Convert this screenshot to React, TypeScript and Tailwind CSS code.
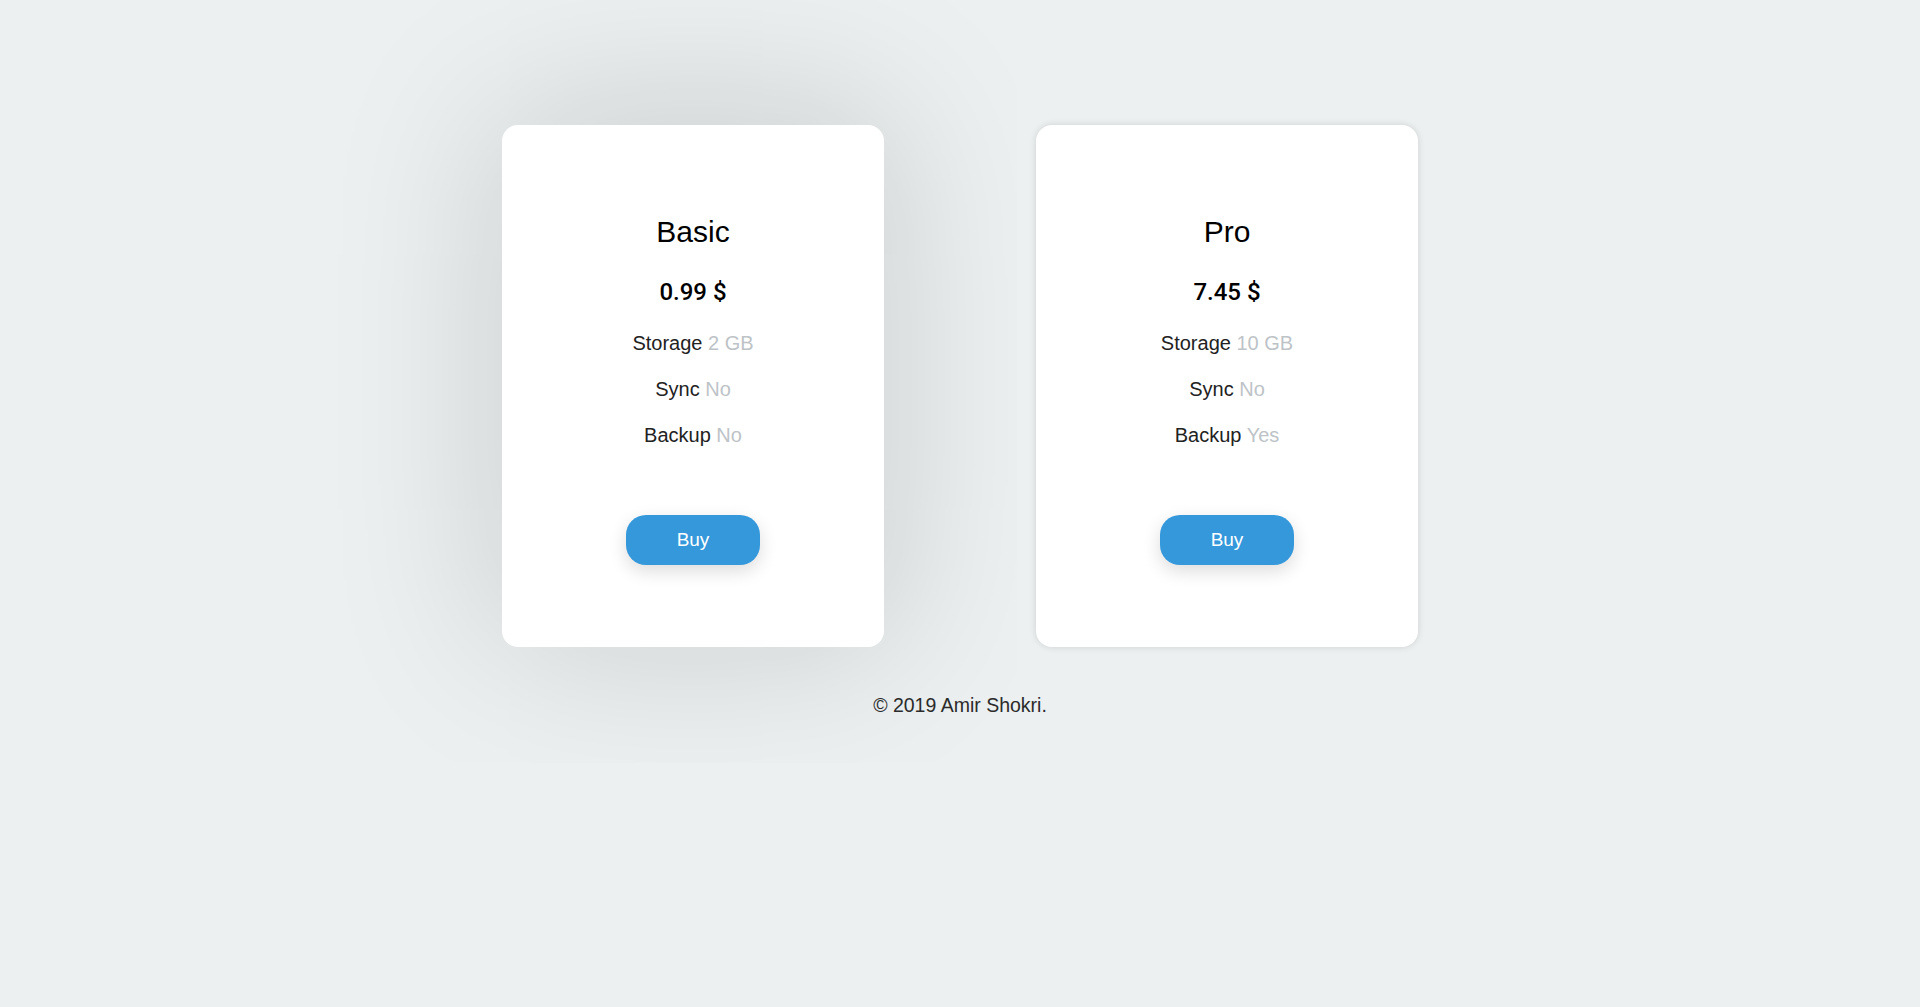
const plans = [
  { name: "Basic", price: "0.99 $", storage: "2 GB", sync: "No", backup: "No", lifted: true },
  { name: "Pro", price: "7.45 $", storage: "10 GB", sync: "No", backup: "Yes", lifted: false },
];

function PlanCard({ plan }: { plan: (typeof plans)[number] }) {
  const rows = [
    ["Storage", plan.storage],
    ["Sync", plan.sync],
    ["Backup", plan.backup],
  ];
  return (
    <div
      className={
        plan.lifted
          ? "flex h-[522px] w-[382px] flex-col items-center rounded-2xl bg-white pt-[90px] shadow-[0_-8px_170px_rgba(0,0,0,0.17)]"
          : "flex h-[522px] w-[382px] flex-col items-center rounded-2xl bg-white pt-[90px] shadow-[0_0_7px_rgba(0,0,0,0.13)]"
      }
    >
      <h2 className="text-[30px] leading-[34px] text-black">{plan.name}</h2>
      <p className="mt-[29px] font-['Roboto',sans-serif] text-[24px] font-medium leading-[28px] text-black">
        {plan.price}
      </p>
      <ul className="mt-[14px] flex flex-col items-center">
        {rows.map(([label, value]) => (
          <li key={label} className="text-[20px] leading-[46px] text-[#222]">
            {label} <span className="text-[#bdc3c7]">{value}</span>
          </li>
        ))}
      </ul>
      <button className="mt-[57px] h-[50px] w-[134px] rounded-[20px] bg-[#3498db] text-[19px] text-white shadow-[0_6px_18px_rgba(0,0,0,0.14)]">
        Buy
      </button>
    </div>
  );
}

export default function App() {
  return (
    <div className="min-h-screen bg-[#ecf0f1] pt-[125px] font-['Liberation_Sans',Arial,sans-serif]">
      <div className="flex justify-center gap-[152px]">
        {plans.map((plan) => (
          <PlanCard key={plan.name} plan={plan} />
        ))}
      </div>
      <p className="mt-[46px] text-center text-[19.5px] leading-[24px] text-[#2b2b2b]">© 2019 Amir Shokri.</p>
    </div>
  );
}
